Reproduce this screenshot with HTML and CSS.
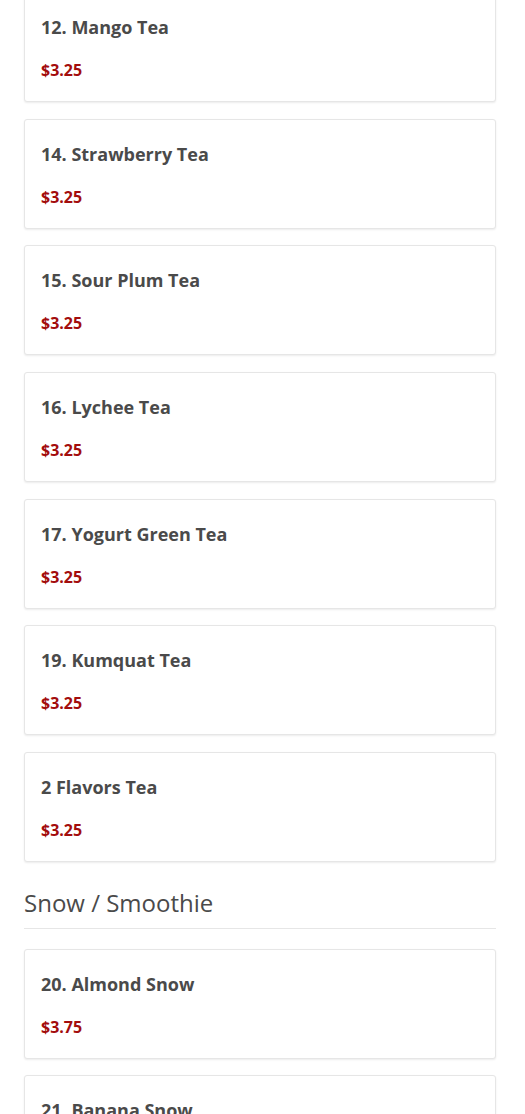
FILE: index.html
```html
<!DOCTYPE html>
<html lang="en">
<head>
    <meta charset="UTF-8">
    <meta name="viewport" content="width=device-width, initial-scale=1.0">
    <title>Menu</title>
    <link rel="stylesheet" href="styles.css">
</head>
<body>
    <div class="menu">
        <div class="item first">
            <h3 class="item-name">12. Mango Tea</h3>
            <div class="item-price">$3.25</div>
        </div>
        <div class="item">
            <h3 class="item-name">14. Strawberry Tea</h3>
            <div class="item-price">$3.25</div>
        </div>
        <div class="item">
            <h3 class="item-name">15. Sour Plum Tea</h3>
            <div class="item-price">$3.25</div>
        </div>
        <div class="item">
            <h3 class="item-name">16. Lychee Tea</h3>
            <div class="item-price">$3.25</div>
        </div>
        <div class="item">
            <h3 class="item-name">17. Yogurt Green Tea</h3>
            <div class="item-price">$3.25</div>
        </div>
        <div class="item">
            <h3 class="item-name">19. Kumquat Tea</h3>
            <div class="item-price">$3.25</div>
        </div>
        <div class="item">
            <h3 class="item-name">2 Flavors Tea</h3>
            <div class="item-price">$3.25</div>
        </div>

        <h2 class="category">Snow / Smoothie</h2>

        <div class="item">
            <h3 class="item-name">20. Almond Snow</h3>
            <div class="item-price">$3.75</div>
        </div>
        <div class="item">
            <h3 class="item-name">21. Banana Snow</h3>
            <div class="item-price">$3.75</div>
        </div>
    </div>
</body>
</html>
```

FILE: styles.css
```css
body {
    margin: 0;
    background-color: #fff;
    font-family: "Open Sans", "DejaVu Sans", sans-serif;
    color: #444;
}
.menu {
    padding: 0 29px 0 24px;
}
.item {
    border: 1px solid #e6e6e6;
    border-radius: 3px;
    box-shadow: 0 1px 2px rgba(0, 0, 0, 0.08);
    padding: 21px 16px 20px 16px;
    margin-bottom: 16.67px;
    background-color: #fff;
}
.first {
    margin-top: -8px;
}
.item-name {
    margin: 0;
    font-size: 18px;
    line-height: 26px;
    font-weight: 700;
    color: #4a4a4a;
}
.item-price {
    margin-top: 19px;
    font-size: 16px;
    line-height: 22px;
    font-weight: 700;
    color: #a30d0d;
}
.category {
    margin: 0 0 20px 0;
    padding: 8px 0 9px 0;
    font-size: 24px;
    line-height: 32px;
    font-weight: 400;
    color: #4a4a4a;
    border-bottom: 1px solid #e6e6e6;
}
```
